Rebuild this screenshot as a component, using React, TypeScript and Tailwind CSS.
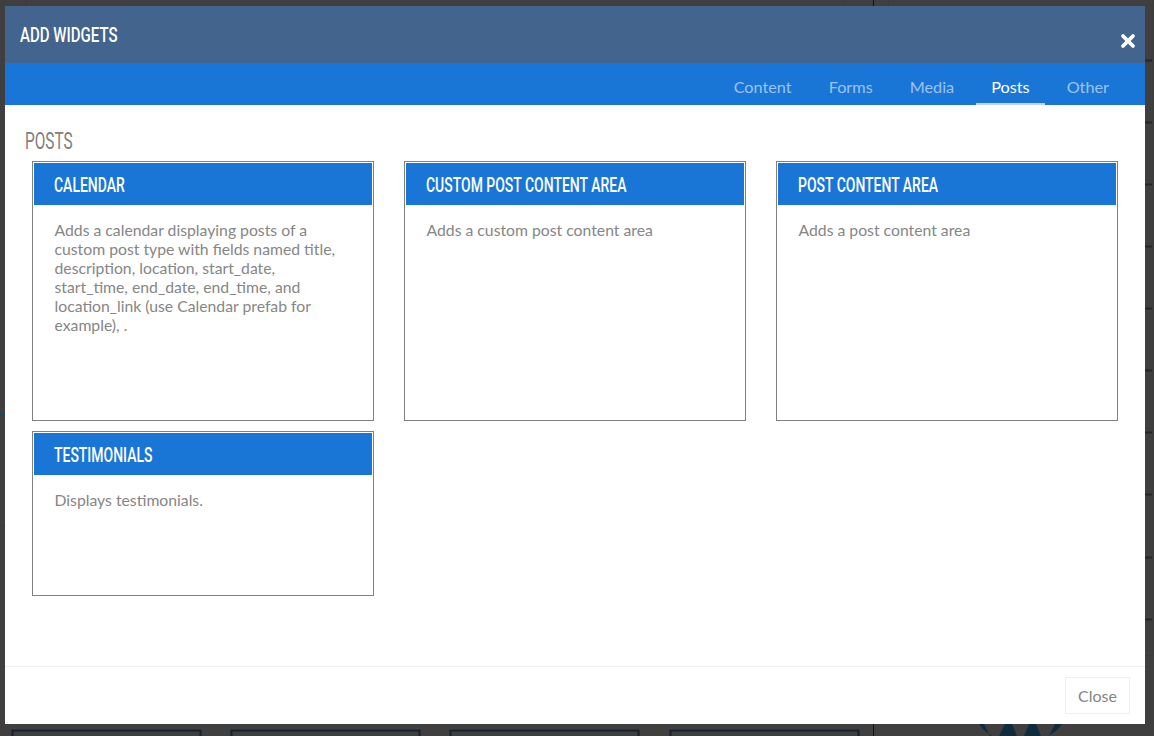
import React from 'react';
import { X } from 'lucide-react';

const tabs = ['Content', 'Forms', 'Media', 'Posts', 'Other'];

const ticks = [60, 122, 184, 246, 308, 370, 432, 494, 557, 619];

// dimmed page that shows around the modal
const Backdrop = () => (
  <svg className="absolute inset-0" width="1154" height="736" fill="none" aria-hidden="true">
    <path d="M26.5 1v5M844.5 1v5M888.5 1v5M1152.5 1v654.5H1146M0 414.5h5M0 525.5h5" stroke="#12405e" strokeDasharray="1 1" />
    <path d="M873.5 0v6M873.5 724v12" stroke="#111" />
    {ticks.map((y) => (
      <path key={y} d={`M1145 ${y}.5h7`} stroke="#262626" strokeWidth="2" />
    ))}
    {[12, 231, 450, 670].map((x) => (
      <g key={x}>
        <path d={`M${x}.5 736v-5.5h188v5.5`} stroke="#16212b" strokeWidth="2" />
        <path d={`M${x - 1} 729.5h190`} stroke="#12405e" strokeDasharray="1 1" />
      </g>
    ))}
    <path d="M979 724c3 5 8 9 13 12h56c6-3 11-7 14-12h-7l-6 12h-8l-5-12h-7l-5 12h-7l-5-12h-7l-6 12h-9l-6-12z" fill="#0f2c3f" />
  </svg>
);

const Heading: React.FC<{ className: string; children: React.ReactNode }> = ({ className, children }) => (
  <span className={`inline-block origin-left whitespace-nowrap uppercase font-['Roboto',sans-serif] font-medium ${className}`}>{children}</span>
);

const WidgetCard: React.FC<{ title: string; height: string; children: React.ReactNode }> = ({ title, height, children }) => (
  <div className={`w-[342px] border border-[#808080] p-px bg-white ${height}`}>
    <div className="h-[42px] bg-[#1976d6] pl-5 flex items-center overflow-hidden">
      <Heading className="text-white text-[21px] scale-x-[0.665] mt-[3px]">{title}</Heading>
    </div>
    <p className="pl-[20.5px] pr-5 pt-[15px] text-[15.75px] leading-[19px] text-[#868686]">{children}</p>
  </div>
);

export default function App() {
  return (
    <div className="relative h-[736px] w-[1154px] overflow-hidden bg-[#3f3f3f] pt-[6px] pl-[5px] font-['Lato',sans-serif]">
      <Backdrop />
      <div className="relative w-[1140px] h-[718px] bg-white flex flex-col">
        <div className="h-[57px] bg-[#42648d] flex items-center justify-between pl-[15px] pr-[7px]">
          <Heading className="text-white text-[21px] scale-x-[0.715] mt-[3px]">Add Widgets</Heading>
          <X size={20} strokeWidth={4.5} className="text-white self-start mt-[25px]" />
        </div>
        <div className="h-[42px] bg-[#1976d6] flex justify-end pr-[17.5px]">
          {tabs.map((tab) => (
            <div
              key={tab}
              className={`px-[15.5px] pt-[12px] mx-[3px] text-[16.25px] leading-[23px] ${tab === 'Posts' ? 'text-white border-b-[2px] border-[#bbd6f3]' : 'text-[#9cc3ef]'}`}
            >
              {tab}
            </div>
          ))}
        </div>
        <div className="flex-1 pl-5 pt-[24px]">
          <Heading className="block text-[#808080] text-[23px] leading-[26px] font-normal scale-x-[0.67]">Posts</Heading>
          <div className="mt-[6px] ml-[7px] flex flex-wrap gap-x-[30px] gap-y-[10px]">
            <WidgetCard title="Calendar" height="h-[260px]">
              Adds a calendar displaying posts of a custom post type with fields named title, description, location, start_date, start_time, end_date, end_time, and location_link (use Calendar prefab for example), .
            </WidgetCard>
            <WidgetCard title="Custom Post Content Area" height="h-[260px]">Adds a custom post content area</WidgetCard>
            <WidgetCard title="Post Content Area" height="h-[260px]">Adds a post content area</WidgetCard>
            <WidgetCard title="Testimonials" height="h-[165px]">Displays testimonials.</WidgetCard>
          </div>
        </div>
        <div className="h-[58px] border-t border-[#eeeeee] flex justify-end pt-[10px] pr-[15px]">
          <button className="h-[37px] w-[65px] border border-[#eeeeee] text-[16px] text-[#868686]">Close</button>
        </div>
      </div>
    </div>
  );
}
